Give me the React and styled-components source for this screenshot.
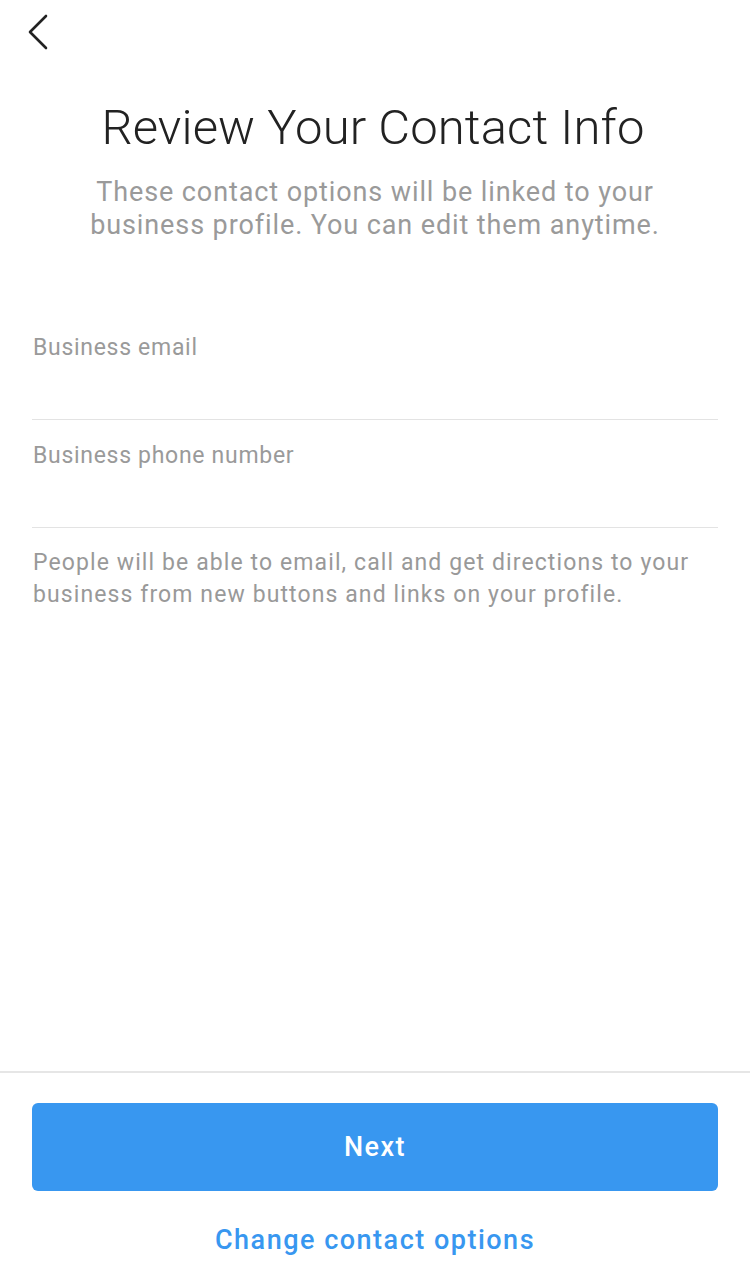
import React from "react";
import styled, { createGlobalStyle } from "styled-components";

const GlobalStyle = createGlobalStyle`
  html, body {
    margin: 0;
    padding: 0;
    background: #fff;
  }
  body {
    font-family: Roboto, "Liberation Sans", sans-serif;
    -webkit-font-smoothing: antialiased;
  }
`;

const fields = ["Business email", "Business phone number"];

const App = () => {
  return (
    <>
      <GlobalStyle />
      <Page>
        <TopBar>
          <BackButton aria-label="Back">
            <svg width="22" height="36" viewBox="0 0 22 36" fill="none">
              <path
                d="M19 2 L3 18 L19 34"
                stroke="#222"
                strokeWidth="2.6"
                strokeLinecap="round"
                strokeLinejoin="round"
              />
            </svg>
          </BackButton>
        </TopBar>
        <Header>
          <Title>Review Your Contact Info</Title>
          <Subtitle>
            These contact options will be linked to your
            <br />
            business profile. You can edit them anytime.
          </Subtitle>
        </Header>
        <Form>
          {fields.map((label, i) => (
            <Field key={label} first={i === 0}>
              <FieldLabel>{label}</FieldLabel>
            </Field>
          ))}
          <HelpText>
            People will be able to email, call and get directions to your
            <br />
            business from new buttons and links on your profile.
          </HelpText>
        </Form>
        <Footer>
          <PrimaryButton>Next</PrimaryButton>
          <LinkButton>Change contact options</LinkButton>
        </Footer>
      </Page>
    </>
  );
};

const Page = styled.div`
  width: 750px;
  min-height: 1285px;
  display: flex;
  flex-direction: column;
  box-sizing: border-box;
`;

const TopBar = styled.div`
  height: 64px;
  display: flex;
  align-items: center;
  padding-left: 27px;
`;

const BackButton = styled.button`
  border: none;
  background: none;
  padding: 0;
  display: flex;
  cursor: pointer;
`;

const Header = styled.div`
  display: flex;
  flex-direction: column;
  align-items: center;
  text-align: center;
  padding-top: 33px;
`;

const Title = styled.h1`
  margin: 0;
  font-size: 49px;
  font-weight: 300;
  color: #222;
  line-height: 62px;
  letter-spacing: 0.1px;
  padding-right: 4px;
`;

const Subtitle = styled.p`
  margin: 17px 0 0 0;
  font-size: 27px;
  font-weight: 400;
  color: #9a9a9a;
  line-height: 33px;
  letter-spacing: 0.9px;
`;

const Form = styled.div`
  display: flex;
  flex-direction: column;
  padding: 80px 32px 0 32px;
  flex: 1;
`;

const Field = styled.div`
  height: ${({ first }) => (first ? "98px" : "108px")};
  padding-top: ${({ first }) => (first ? "10px" : "20px")};
  border-bottom: 1.5px solid #e3e3e3;
  box-sizing: border-box;
`;

const FieldLabel = styled.div`
  font-size: 23px;
  color: #9a9a9a;
  line-height: 32px;
  letter-spacing: 0.7px;
  padding-left: 1px;
`;

const HelpText = styled.p`
  margin: 19px 0 0 0;
  font-size: 23px;
  color: #999;
  line-height: 32px;
  letter-spacing: 1.1px;
  padding-left: 1px;
`;

const Footer = styled.div`
  border-top: 2px solid #e6e6e6;
  margin-top: 2px;
  display: flex;
  flex-direction: column;
  align-items: stretch;
  padding: 30px 32px 22px;
`;

const PrimaryButton = styled.button`
  height: 88px;
  border: none;
  border-radius: 6px;
  background: #3897f0;
  color: #fff;
  font-family: Roboto, "Liberation Sans", sans-serif;
  font-size: 27px;
  font-weight: 500;
  letter-spacing: 1.5px;
  cursor: pointer;
`;

const LinkButton = styled.button`
  margin-top: 26px;
  border: none;
  background: none;
  color: #3897f0;
  font-family: Roboto, "Liberation Sans", sans-serif;
  font-size: 27px;
  font-weight: 500;
  line-height: 44px;
  letter-spacing: 1.5px;
  cursor: pointer;
`;

export default App;
